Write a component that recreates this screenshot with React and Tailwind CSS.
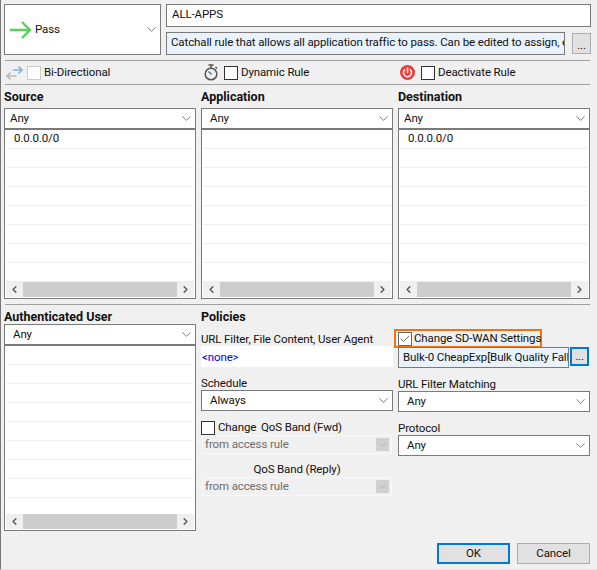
import { ChevronDown, ChevronLeft, ChevronRight, Check } from 'lucide-react';

const Select = ({ value, pad = 'pl-[5px]' }) => (
  <div className={`h-[21px] bg-white border border-[#7a7a7a] flex items-center justify-between pr-[1px] ${pad}`}>
    <span className="pt-px">{value}</span>
    <ChevronDown size={15} strokeWidth={1.1} className="text-[#444]" />
  </div>
);

const DisabledSelect = ({ value }) => (
  <div className="h-[19px] w-[190px] ml-px bg-[#f0f0f0] border border-[#f8f8f8] flex items-center justify-between pl-[2px] pr-[2px] text-[#6d6d6d]">
    <span className="pt-px">{value}</span>
    <span className="w-[13px] h-[13px] bg-[#d0d0d0] flex items-center justify-center">
      <ChevronDown size={13} strokeWidth={1.1} className="text-[#a0a0a0]" />
    </span>
  </div>
);

const Scrollbar = () => (
  <div className="h-[15px] flex items-center bg-[#f0f0f0] shrink-0">
    <span className="w-[17px] flex justify-center"><ChevronLeft size={11} strokeWidth={3} className="text-[#555]" /></span>
    <span className="flex-1 h-[15px] bg-[#cdcdcd]" />
    <span className="w-[17px] flex justify-center"><ChevronRight size={11} strokeWidth={3} className="text-[#555]" /></span>
  </div>
);

const ListBox = ({ rows, text, className }) => (
  <div className={`bg-white border border-[#7a7a7a] px-[1px] pb-[1px] flex flex-col ${className}`}>
    <div className="flex-1 overflow-hidden">
      {Array.from({ length: rows }).map((_, i) => (
        <div key={i} className="h-[19px] border-b border-[#eeeeee] pl-[8px] leading-[17px]">
          {i === 0 ? text : ''}
        </div>
      ))}
    </div>
    <Scrollbar />
  </div>
);

const Heading = ({ children, className = '' }) => (
  <div className={`font-bold text-[12.5px] tracking-normal flex items-end leading-none ${className}`}>{children}</div>
);

const PickerColumn = ({ title, text, pad }) => (
  <div className="w-[192px]">
    <Heading className="h-[23px] pb-[5px]">{title}</Heading>
    <Select value="Any" pad={pad} />
    <ListBox rows={8} text={text} className="h-[170px]" />
  </div>
);

const Checkbox = ({ checked, dim }) => (
  <span className={`w-[14px] h-[14px] border flex items-center justify-center bg-white shrink-0 ${dim ? 'border-[#cccccc]' : checked ? 'border-[#666666]' : 'border-[#333333]'}`}>
    {checked && <Check size={14} strokeWidth={1.5} className="text-[#444]" />}
  </span>
);

const Dots = ({ className }) => (
  <div className={`flex items-end justify-center leading-[16px] bg-[#e1e1e1] ${className}`}>...</div>
);

const PassArrow = () => (
  <svg width="22" height="20" viewBox="0 0 22 20" fill="none" stroke="#5ad05a" strokeWidth="2.4">
    <path d="M0 10h20M12 2l8 8-8 8" />
  </svg>
);

const BiDirIcon = () => (
  <svg width="17" height="14" viewBox="0 0 17 14" fill="none" strokeWidth="1.6">
    <path d="M16 4H7M12.5 .7L16 4l-3.5 3.3" stroke="#7db4e6" />
    <path d="M1 10h9.5M4.5 6.7L1 10l3.5 3.3" stroke="#b9b9b9" />
  </svg>
);

const TimerIcon = () => (
  <svg width="14" height="17" viewBox="0 0 14 17" fill="none" stroke="#555" strokeWidth="1.5">
    <circle cx="7" cy="10" r="5.8" />
    <path d="M4.5 1h5M7 1v3M11.5 3l1.5 1.5" />
    <path d="M4.5 7.5L7.5 10.5" stroke="#3a78b5" />
  </svg>
);

const PowerIcon = () => (
  <svg width="15" height="15" viewBox="0 0 15 15" fill="none">
    <circle cx="7.5" cy="7.5" r="7.5" fill="#ee3b3b" />
    <path d="M4.7 4.8a4 4 0 1 0 5.6 0" stroke="#fff" strokeWidth="1.5" strokeLinecap="round" />
    <path d="M7.5 3v4.5" stroke="#fff" strokeWidth="1.5" strokeLinecap="round" />
  </svg>
);

const Label = ({ children, className = '' }) => (
  <div className={`leading-[14px] ${className}`}>{children}</div>
);

const App = () => (
  <div className="w-[597px] h-[570px] bg-[#f0f0f0] border-l border-l-[#777] border-b border-b-[#e0e0e0] pl-[3px] pt-[4px] text-[11.5px] tracking-[-0.12px] text-[#111] overflow-hidden font-['Roboto','Liberation_Sans',sans-serif]">
    <div className="flex gap-[5px]">
      <div className="w-[157px] h-[51px] bg-white border border-[#7a7a7a] flex items-center pl-[5px] pr-[1px]">
        <PassArrow />
        <span className="ml-[3px] flex-1">Pass</span>
        <ChevronDown size={15} strokeWidth={1.1} className="text-[#444]" />
      </div>
      <div className="flex-1 flex flex-col gap-[5px]">
        <div className="w-[425px] h-[23px] bg-white border border-[#7a7a7a] pl-[5px] leading-[18px]">ALL-APPS</div>
        <div className="flex">
          <div className="w-[399px] h-[23px] bg-[#eaf3fd] border border-[#7a7a7a] pl-[4px] leading-[19px] overflow-hidden whitespace-nowrap">
            Catchall rule that allows all application traffic to pass. Can be edited to assign, e.g.
          </div>
          <Dots className="w-[19px] h-[21px] ml-[7px] mt-px border border-[#adadad]" />
        </div>
      </div>
    </div>

    <div className="ml-px w-[585px] h-[25px] mt-[5px] border-y border-[#a0a0a0] flex items-center">
      <div className="w-[198px] flex items-center pl-px">
        <BiDirIcon />
        <span className="ml-[4px]"><Checkbox dim /></span>
        <span className="ml-[3px]">Bi-Directional</span>
      </div>
      <div className="w-[197px] flex items-center pl-px">
        <TimerIcon />
        <span className="ml-[6px]"><Checkbox /></span>
        <span className="ml-[3px]">Dynamic Rule</span>
      </div>
      <div className="flex items-center">
        <PowerIcon />
        <span className="ml-[6px]"><Checkbox /></span>
        <span className="ml-[3px]">Deactivate Rule</span>
      </div>
    </div>

    <div className="flex gap-[5px]">
      <PickerColumn title="Source" text="0.0.0.0/0" />
      <PickerColumn title="Application" pad="pl-[8px]" />
      <PickerColumn title="Destination" text="0.0.0.0/0" />
    </div>

    <div className="ml-px w-[585px] mt-[5px] border-t border-[#a0a0a0]" />

    <div className="flex gap-[5px]">
      <div className="w-[192px]">
        <Heading className="h-[19px] pb-px">Authenticated User</Heading>
        <Select value="Any" pad="pl-[8px]" />
        <ListBox rows={9} className="h-[186px]" />
      </div>

      <div className="w-[192px]">
        <Heading className="h-[19px] pb-px">Policies</Heading>
        <Label className="mt-[8px]">URL Filter, File Content, User Agent</Label>
        <div className="h-[21px] bg-white pl-[1px] leading-[23px] text-[#0000e0]">&lt;none&gt;</div>
        <Label className="mt-[9px]">Schedule</Label>
        <Select value="Always" pad="pl-[8px]" />
        <div className="flex items-center mt-[9px] h-[15px]">
          <Checkbox />
          <span className="ml-[3px]">Change <span className="ml-[2px]">QoS Band (Fwd)</span></span>
        </div>
        <DisabledSelect value="from access rule" />
        <Label className="mt-[8px] text-center">QoS Band (Reply)</Label>
        <div className="mt-[1px]"><DisabledSelect value="from access rule" /></div>
      </div>

      <div className="w-[192px]">
        <div className="h-[19px]" />
        <div className="-ml-[4px] w-[148px] h-[19px] mt-[5px] border-[2px] border-[#f0730f] flex items-center pl-[2px]">
          <Checkbox checked />
          <span className="ml-[2px] whitespace-nowrap">Change SD-WAN Settings</span>
        </div>
        <div className="flex -mt-px">
          <div className="w-[171px] h-[21px] bg-[#eaf3fd] border border-[#7a7a7a] pl-[4px] leading-[18px] overflow-hidden whitespace-nowrap">Bulk-0 CheapExp[Bulk Quality Fallback]</div>
          <Dots className="w-[19px] h-[19px] ml-[1px] border-[2px] border-[#0078d7]" />
        </div>
        <Label className="mt-[9px]">URL Filter Matching</Label>
        <Select value="Any" pad="pl-[8px]" />
        <Label className="mt-[9px]">Protocol</Label>
        <Select value="Any" pad="pl-[8px]" />
      </div>
    </div>

    <div className="flex justify-end gap-[7px] w-[586px] mt-[12px]">
      <div className="w-[73px] h-[21px] bg-[#e1e1e1] border-[2px] border-[#0078d7] flex items-center justify-center">OK</div>
      <div className="w-[73px] h-[21px] bg-[#e1e1e1] border border-[#adadad] flex items-center justify-center">Cancel</div>
    </div>
  </div>
);

export default App;
